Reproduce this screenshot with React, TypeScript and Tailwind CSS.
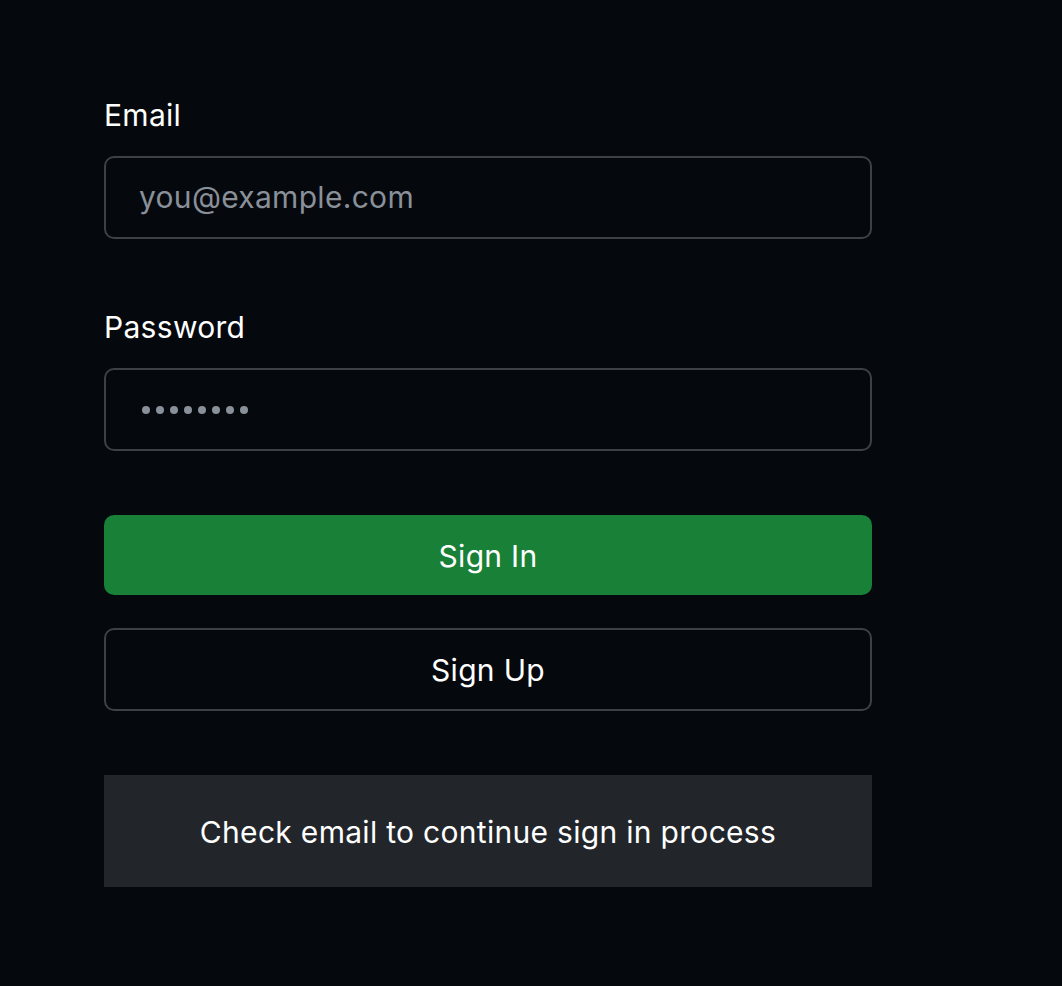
import React from "react";

export default function App() {
  return (
    <div className="min-h-[986px] w-full bg-[#05090d] text-white tracking-[0.3px]" style={{ fontFamily: "Inter, 'Noto Sans', sans-serif" }}>
      <div className="ml-[104px] w-[768px] pt-[96px]">
        <div className="flex flex-col">
          <label className="text-[30px] leading-[38px] text-white">Email</label>
          <div className="mt-[22px] h-[83px] rounded-[10px] border-2 border-[#3c4148] flex items-center pl-[33px]">
            <span className="text-[30px] text-[#8a909a]">you@example.com</span>
          </div>
        </div>
        <div className="flex flex-col mt-[69px]">
          <label className="text-[30px] leading-[38px] text-white">Password</label>
          <div className="mt-[22px] h-[83px] rounded-[10px] border-2 border-[#3c4148] flex items-center pl-[36px] gap-[6px]">
            {Array.from({ length: 8 }).map((_, i) => (
              <span key={i} className="block w-[8px] h-[8px] rounded-full bg-[#8a909a]" />
            ))}
          </div>
        </div>
        <button className="mt-[64px] w-full h-[80px] rounded-[10px] bg-[#198038] text-[30px] text-white flex items-center justify-center pt-[3px]">
          Sign In
        </button>
        <button className="mt-[33px] w-full h-[83px] rounded-[10px] border-2 border-[#3c4148] text-[30px] text-white flex items-center justify-center pt-[2px]">
          Sign Up
        </button>
        <div className="mt-[64px] w-full h-[112px] bg-[#22262b] flex items-center justify-center text-[30px] text-white pt-[2px]">
          Check email to continue sign in process
        </div>
      </div>
    </div>
  );
}
